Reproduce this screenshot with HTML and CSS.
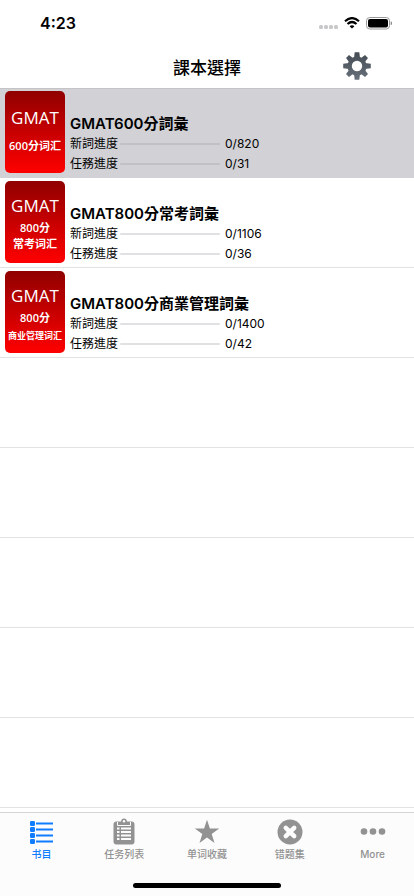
FILE: index.html
```html
<!DOCTYPE html>
<html lang="zh-Hant">
<head>
<meta charset="utf-8">
<meta name="viewport" content="width=device-width, initial-scale=1">
<title>課本選擇</title>
<link rel="stylesheet" href="styles.css">
</head>
<body>
<div class="screen">
  <div class="status">
    <span class="time">4:23</span>
    <div class="indicators">
      <svg width="20" height="5" viewBox="0 0 20 5" fill="#c8c8ca"><rect x="1" width="4" height="4" rx="1.5"/><rect x="6" width="4" height="4" rx="1.5"/><rect x="11" width="4" height="4" rx="1.5"/><rect x="16" width="4" height="4" rx="1.5"/></svg>
      <svg width="16" height="13" viewBox="0 0 16 13" fill="none" stroke="#000" stroke-width="2.2"><path d="M1 4.2Q8-2 15 4.2"/><path d="M3.500 7Q8 3 12.500 7"/><path d="M8 11.600 5.600 9.200Q8 7.200 10.400 9.200Z" fill="#000" stroke="none"/></svg>
      <svg width="26" height="13" viewBox="0 0 26 13"><rect x=".5" y=".5" width="23" height="11.5" rx="3.3" fill="none" stroke="#999"/><rect x="2" y="2" width="20" height="8.5" rx="2" fill="#000"/><path d="M24.7 4.3q1.4.6 1.4 2t-1.4 2z" fill="#888"/></svg>
    </div>
  </div>
  <header class="nav">
    <h1>課本選擇</h1>
    <button class="settings" aria-label="設定">
      <svg width="28" height="28" viewBox="-14 -14 28 28">
        <defs><linearGradient id="steel" gradientUnits="userSpaceOnUse" x1="0" y1="-14" x2="0" y2="14"><stop offset="0" stop-color="#444b53"/><stop offset="1" stop-color="#68717b"/></linearGradient></defs>
        <g fill="url(#steel)">
          <path d="M-2.3-13.8h4.6L3-8h-6zM-2.3 13.8h4.6L3 8h-6zM-13.8-2.3v4.6L-8 3v-6zM13.8-2.3v4.6L8 3v-6z"/>
          <path d="M-11-8-8-11-3.5-7.5-7.5-3.5zM11-8 8-11 3.5-7.5 7.5-3.5zM-11 8-8 11-3.5 7.5-7.5 3.5zM11 8 8 11 3.5 7.5 7.5 3.5z"/>
          <path fill-rule="evenodd" d="M0-9.600a9.600 9.600 0 1 0 0 19.200a9.600 9.600 0 1 0 0-19.200zM0-5.200a5.200 5.200 0 1 1 0 10.400a5.200 5.200 0 1 1 0-10.400z"/>
        </g>
      </svg>
    </button>
  </header>
  <main>
    <ul class="books">
      <li class="book selected">
        <div class="cover one-line" lang="zh-Hans"><b>GMAT</b><span>600分词汇</span></div>
        <div class="info">
          <h2>GMAT600分詞彙</h2>
          <div class="stat"><span>新詞進度</span><i class="track"></i><span>0/820</span></div>
          <div class="stat"><span>任務進度</span><i class="track"></i><span>0/31</span></div>
        </div>
      </li>
      <li class="book">
        <div class="cover" lang="zh-Hans"><b>GMAT</b><span>800分</span><span>常考词汇</span></div>
        <div class="info">
          <h2>GMAT800分常考詞彙</h2>
          <div class="stat"><span>新詞進度</span><i class="track"></i><span>0/1106</span></div>
          <div class="stat"><span>任務進度</span><i class="track"></i><span>0/36</span></div>
        </div>
      </li>
      <li class="book">
        <div class="cover" lang="zh-Hans"><b>GMAT</b><span>800分</span><span class="small">商业管理词汇</span></div>
        <div class="info">
          <h2>GMAT800分商業管理詞彙</h2>
          <div class="stat"><span>新詞進度</span><i class="track"></i><span>0/1400</span></div>
          <div class="stat"><span>任務進度</span><i class="track"></i><span>0/42</span></div>
        </div>
      </li>
      <li class="book"></li>
      <li class="book"></li>
      <li class="book"></li>
      <li class="book"></li>
      <li class="book"></li>
    </ul>
  </main>
  <footer class="bottom">
    <nav class="tabs" lang="zh-Hans">
      <a href="#books" class="active">
        <svg width="28" height="28" viewBox="0 0 28 28" fill="currentColor"><rect x="3" y="3" width="5" height="5" rx="1.2"/><rect x="3" y="9" width="5" height="5" rx="1.2"/><rect x="3" y="15" width="5" height="5" rx="1.2"/><rect x="3" y="21" width="5" height="5" rx="1.2"/><path d="M9 4.600h17v2H9zM9 10.600h17v2H9zM9 16.600h17v2H9zM9 22.600h17v2H9z"/></svg>
        <span>书目</span>
      </a>
      <a href="#tasks">
        <svg width="28" height="28" viewBox="0 0 28 28"><rect x="3.500" y="3.500" width="21" height="23" rx="3" fill="currentColor"/><path d="M8 4h3q0-3.500 3-3.500T17 4h3v3H8z" fill="currentColor"/><path d="M7.500 4v3.500h13V4" fill="none" stroke="#fcfcfc" stroke-width="1"/><circle cx="14" cy="3.200" r="1.200" fill="#fcfcfc"/><path d="M7 9.500h2.500v2H7zM11 9.500h10v2H11zM7 13h2.500v2H7zM11 13h10v2H11zM7 16.500h2.500v2H7zM11 16.500h10v2H11zM7 20h2.500v2H7zM11 20h10v2H11z" fill="#fcfcfc"/></svg>
        <span>任务列表</span>
      </a>
      <a href="#favorites">
        <svg width="28" height="28" viewBox="0 0 28 28" fill="currentColor"><path d="M14 1.800 16.900 10.600H26.200L18.700 16 21.500 25 14 19.500 6.500 25 9.300 16 1.800 10.600H11.100Z"/></svg>
        <span>单词收藏</span>
      </a>
      <a href="#mistakes">
        <svg width="28" height="28" viewBox="0 0 28 28"><circle cx="14" cy="14" r="12.500" fill="currentColor"/><path d="M9.800 9.800l8.400 8.400M18.200 9.800l-8.400 8.400" stroke="#fcfcfc" stroke-width="4.500" stroke-linecap="round"/></svg>
        <span>错题集</span>
      </a>
      <a href="#more">
        <svg width="28" height="28" viewBox="0 0 28 28" fill="currentColor"><circle cx="5" cy="13.500" r="3.300"/><circle cx="14" cy="13.500" r="3.300"/><circle cx="23" cy="13.500" r="3.300"/></svg>
        <span>More</span>
      </a>
    </nav>
    <div class="home"></div>
  </footer>
</div>
</body>
</html>
```
FILE: styles.css
```css
* {
  box-sizing: border-box;
}

body {
  margin: 0;
  background: #fff;
  color: #000;
  font-family: Inter, "Noto Sans CJK TC", sans-serif;
}

.screen {
  display: flex;
  flex-direction: column;
  height: 100vh;
  overflow: hidden;
}

.status {
  display: flex;
  flex: none;
  align-items: center;
  justify-content: space-between;
  height: 44px;
  padding: 2px 22px 0 40px;
}

.time {
  font-size: 16px;
  font-weight: 600;
}

.indicators {
  display: flex;
  align-items: flex-end;
  gap: 6px;
}

.nav {
  display: grid;
  flex: none;
  grid-template-columns: 1fr auto 1fr;
  align-items: center;
  height: 44px;
  box-shadow: 0 1px 0 #c4c4c6;
  z-index: 1;
}

.nav h1 {
  grid-column: 2;
  margin: 0;
  font-size: 17px;
  font-weight: 500;
}

.settings {
  justify-self: end;
  display: flex;
  margin-right: 43px;
  padding: 0;
  border: 0;
  background: none;
}

main {
  flex: 1;
  min-height: 0;
  overflow: hidden;
}

.books {
  margin: 0;
  padding: 0;
  list-style: none;
}

.book {
  display: flex;
  gap: 5px;
  height: 90px;
  padding: 3px 5px;
  border-bottom: 1px solid #e2e2e4;
}

.selected {
  border-color: #d1d1d6;
  background: #d1d1d6;
}

.cover {
  display: flex;
  flex: none;
  flex-direction: column;
  align-items: center;
  width: 60px;
  height: 82px;
  padding-top: 13px;
  border-radius: 5px;
  background: linear-gradient(#900000, #ff0000);
  color: #fff;
  font-family: "Open Sans", "Noto Sans CJK SC", sans-serif;
  font-size: 11px;
  font-weight: 600;
  line-height: 16px;
  white-space: nowrap;
}

.cover b {
  margin-bottom: 2px;
  font-size: 17px;
  font-weight: 500;
  line-height: 24px;
}

.one-line {
  padding-top: 15px;
}

.one-line b {
  margin-bottom: 8px;
}

.cover .small {
  font-size: 9px;
  line-height: 20px;
}

.info {
  padding-top: 23px;
}

.info h2 {
  margin: 0;
  font-size: 15px;
  font-weight: 600;
  line-height: 20px;
}

.stat {
  display: flex;
  align-items: center;
  font-size: 12px;
  line-height: 20px;
}

.track {
  width: 100px;
  height: 2px;
  margin: 0 5px 0 2px;
  border-radius: 1px;
  background: #e1e1e3;
}

.selected .track {
  background: #c0c0c5;
}

.bottom {
  flex: none;
  border-top: 1px solid #d4d4d6;
  background: #fcfcfc;
}

.tabs {
  display: grid;
  grid-template-columns: repeat(5, 1fr);
  padding-top: 5px;
}

.tabs a {
  display: flex;
  flex-direction: column;
  align-items: center;
  gap: 1px;
  color: #929292;
  font-family: Inter, "Noto Sans CJK SC", sans-serif;
  font-size: 10px;
  font-weight: 500;
  line-height: 14px;
  text-decoration: none;
}

.tabs .active {
  color: #107cff;
}

.home {
  width: 148px;
  height: 5px;
  margin: 22px auto 8px;
  border-radius: 3px;
  background: #000;
}
```
